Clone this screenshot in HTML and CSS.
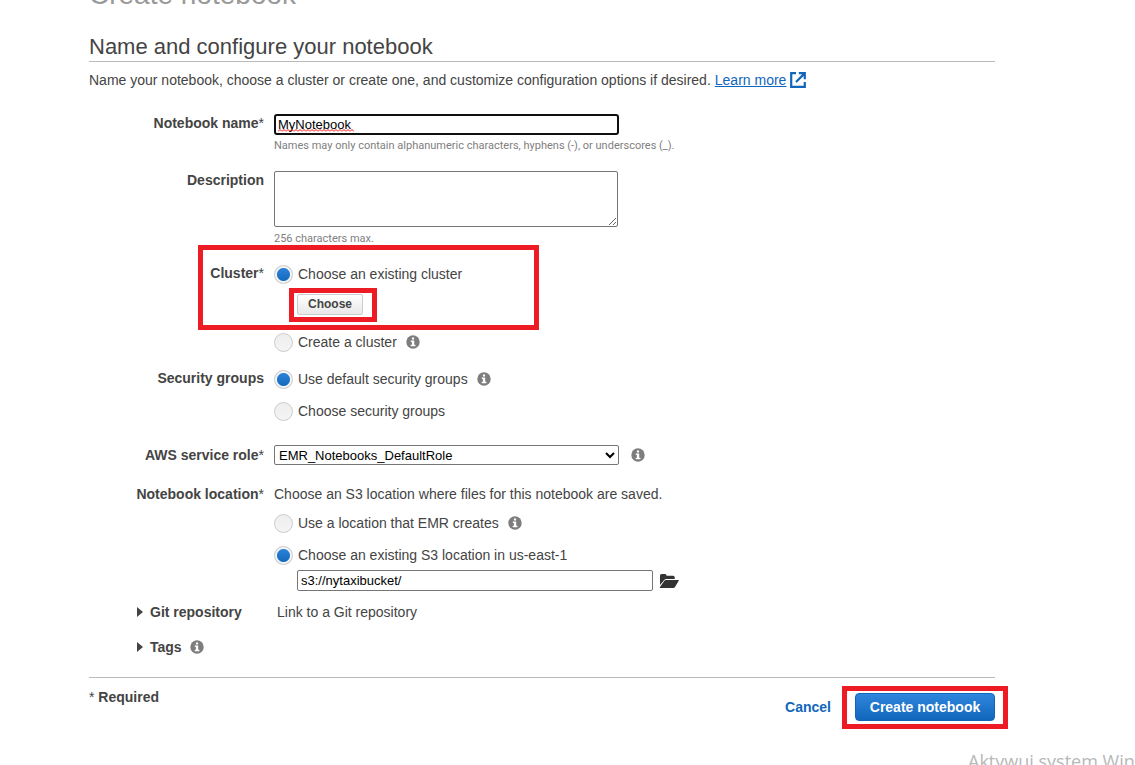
FILE: index.html
```html
<!DOCTYPE html>
<html lang="en">
<head>
<meta charset="utf-8">
<title>Create notebook</title>
<link rel="stylesheet" href="styles.css">
</head>
<body>
<svg class="defs" aria-hidden="true">
  <symbol id="info" viewBox="0 0 14 14">
    <circle cx="7" cy="7" r="6.7" fill="#7d7d7d"/>
    <path d="M5.9 2.4h2.2v2H5.9zM4.8 5.5h3.4v4.3h1.2v1.4H4.7V9.8h1.2V6.9H4.8z" fill="#fff"/>
  </symbol>
</svg>
<main class="page">
  <h1 class="title">Create notebook</h1>
  <h2 class="heading">Name and configure your notebook</h2>
  <p class="intro">Name your notebook, choose a cluster or create one, and customize configuration options if desired. <a class="learn" href="#">Learn more</a>
    <svg class="external" viewBox="0 0 16 16" aria-hidden="true"><path d="M6 1.2H1.2v13.6h13.6V10M8.8 1.2h6v6M14.4 1.6L6 10" fill="none" stroke="#1166bb" stroke-width="2.2"/></svg>
  </p>
  <form class="form">
    <div class="row">
      <label class="label" for="name">Notebook name<span class="star">*</span></label>
      <div class="field">
        <div class="name-box">
          <input class="text name" id="name" type="text" value="MyNotebook" spellcheck="false">
          <svg class="squiggle" viewBox="0 0 76 3" aria-hidden="true">
            <defs><pattern id="wave" width="4" height="3" patternUnits="userSpaceOnUse"><path d="M0 2.5L2 .5L4 2.5" fill="none" stroke="#f00"/></pattern></defs>
            <rect width="76" height="3" fill="url(#wave)"/>
          </svg>
        </div>
        <p class="help">Names may only contain alphanumeric characters, hyphens (-), or underscores (_).</p>
      </div>
    </div>
    <div class="row">
      <label class="label" for="desc">Description</label>
      <div class="field">
        <textarea class="text desc" id="desc"></textarea>
        <p class="help">256 characters max.</p>
      </div>
    </div>
    <div class="row cluster">
      <div class="label" id="cluster-label">Cluster<span class="star">*</span></div>
      <div class="field" role="radiogroup" aria-labelledby="cluster-label">
        <label class="option"><input class="radio" type="radio" name="cluster" checked>Choose an existing cluster</label>
        <div class="choose-box"><button class="choose" type="button">Choose</button><span class="mark mark-choose"></span></div>
        <div class="option create-option"><label class="option"><input class="radio" type="radio" name="cluster">Create a cluster</label><svg class="info"><use href="#info"/></svg></div>
      </div>
      <span class="mark mark-cluster"></span>
    </div>
    <div class="row">
      <div class="label" id="sg-label">Security groups</div>
      <div class="field options" role="radiogroup" aria-labelledby="sg-label">
        <div class="option"><label class="option"><input class="radio" type="radio" name="sg" checked>Use default security groups</label><svg class="info"><use href="#info"/></svg></div>
        <label class="option"><input class="radio" type="radio" name="sg">Choose security groups</label>
      </div>
    </div>
    <div class="row role-row">
      <label class="label" for="role">AWS service role<span class="star">*</span></label>
      <div class="field option">
        <select class="text role" id="role"><option>EMR_Notebooks_DefaultRole</option></select>
        <svg class="info"><use href="#info"/></svg>
      </div>
    </div>
    <div class="row location-row">
      <div class="label" id="loc-label">Notebook location<span class="star">*</span></div>
      <div class="field" role="radiogroup" aria-labelledby="loc-label">
        <p class="note">Choose an S3 location where files for this notebook are saved.</p>
        <div class="options">
          <div class="option"><label class="option"><input class="radio" type="radio" name="loc">Use a location that EMR creates</label><svg class="info"><use href="#info"/></svg></div>
          <label class="option"><input class="radio" type="radio" name="loc" checked>Choose an existing S3 location in us-east-1</label>
        </div>
        <div class="path">
          <input class="text bucket" type="text" value="s3://nytaxibucket/" aria-label="S3 location">
          <button class="browse" type="button" aria-label="Browse"><svg viewBox="0 0 20 16"><path d="M1 12V2.5Q1 1 2.5 1H6q1 0 1.3 1l.3.7h6.6q1.5 0 1.5 1.5v1.9H7.4q-1.5 0-2.4 1.2z" fill="#333"/><path d="M7 7h12.3q.9 0 .3.9L16 14q-.5.9-1.5.9H1.3q-.8 0-.3-.8L5.2 8q.6-1 1.8-1z" fill="#333"/></svg></button>
        </div>
      </div>
    </div>
    <div class="expander">
      <button class="toggle" type="button"><svg class="caret" viewBox="0 0 6 10"><path d="M0 0L6 5L0 10z" fill="#444"/></svg>Git repository</button>
      <span>Link to a Git repository</span>
    </div>
    <div class="expander tags">
      <button class="toggle" type="button"><svg class="caret" viewBox="0 0 6 10"><path d="M0 0L6 5L0 10z" fill="#444"/></svg>Tags<svg class="info"><use href="#info"/></svg></button>
    </div>
    <footer class="footer">
      <p class="required"><span class="star">*</span> Required</p>
      <div class="actions">
        <a class="cancel" href="#">Cancel</a>
        <div class="create-box"><button class="create" type="button">Create notebook</button><span class="mark mark-create"></span></div>
      </div>
    </footer>
  </form>
</main>
<div class="watermark">Aktywuj system Windows</div>
</body>
</html>
```
FILE: styles.css
```css
* { box-sizing: border-box; }
body {
  margin: 0;
  height: 100vh;
  overflow: hidden;
  position: relative;
  background: #fff;
  color: #444;
  font: 14px/20px "Liberation Sans", Arial, sans-serif;
}
h1, h2, p { margin: 0; font-weight: normal; }
button { font: inherit; color: inherit; cursor: pointer; }
.defs { display: none; }
.page { padding: 0 140px 0 89px; margin-top: -21px; }
.title { font-size: 28px; line-height: 32px; color: #999; }
.heading { margin-top: 22px; border-bottom: 1px solid #bbb; font-size: 22px; line-height: 28px; }
.intro { display: flex; align-items: center; gap: 4px; margin-top: 8px; white-space: nowrap; }
.learn { color: #1166bb; }
.external { width: 16px; height: 16px; }

.form { margin-top: 24px; }
.row { display: grid; grid-template-columns: 175px 1fr; column-gap: 10px; margin-bottom: 17px; position: relative; }
.label { font-weight: bold; line-height: 18px; text-align: right; }
.star { font-weight: normal; }
.text { display: block; margin: 0; border: 1px solid #767676; border-radius: 2px; background: #fff; color: #000; font: 13px "Liberation Sans", Arial, sans-serif; }
.name-box { position: relative; }
.name { width: 345px; height: 21px; padding: 0 2px; border: 2px solid #101010; border-radius: 3px; outline: 0; }
.squiggle { position: absolute; left: 4px; top: 15px; width: 76px; height: 3px; }
.desc { width: 344px; height: 56px; margin-bottom: 4px; resize: both; }
.help { margin-top: 3px; font: 11px/16px Roboto, "Open Sans", sans-serif; color: #808080; }
.desc + .help { margin-top: 0; }

.option { display: flex; align-items: center; }
.options { display: grid; gap: 12px; }
.radio { appearance: none; width: 19px; height: 19px; margin: 0 5px 0 0; border: 1px solid #ccc; border-radius: 50%; background: linear-gradient(#eee, #f4f4f4); }
.radio:checked { background: radial-gradient(circle, transparent 6px, #f4f4f4 7px), linear-gradient(#2e86dc, #1166bb); }
.info { width: 14px; height: 14px; margin-left: 9px; }
.choose-box { position: relative; width: 66px; margin: 10px 0 0 23px; }
.choose { display: block; width: 100%; height: 21px; padding: 0 0 2px; border: 1px solid #ccc; border-radius: 2px; background: linear-gradient(#fff, #e8e8e8); font-size: 12px; font-weight: bold; line-height: 16px; }
.create-option { margin-top: 17px; }
.role-row { margin: 24px 0 19px; }
.role-row .label, .location-row .label { line-height: 20px; }
.role { width: 345px; height: 20px; padding: 0; }
.role + .info { margin-left: 12px; }
.location-row { margin-bottom: 11px; }
.note { margin-bottom: 9px; }
.path { display: flex; align-items: center; gap: 6px; margin: 5px 0 0 23px; }
.bucket { width: 356px; height: 21px; padding: 0 3px; }
.browse { display: flex; width: 20px; padding: 0; border: 0; background: none; }
.browse svg { width: 20px; height: 16px; }

.expander { display: grid; grid-template-columns: 140px 1fr; margin-left: 48px; }
.toggle { display: flex; align-items: center; padding: 0; border: 0; background: none; font-weight: bold; }
.toggle .info { margin-left: 8px; }
.caret { width: 6px; height: 10px; margin-right: 7px; }
.tags { margin-top: 15px; }

.footer { display: flex; justify-content: space-between; align-items: flex-start; margin-top: 20px; padding-top: 10px; border-top: 1px solid #bbb; }
.required { line-height: 18px; font-weight: bold; }
.actions { display: flex; align-items: center; gap: 24px; margin-top: 5px; }
.cancel { color: #1166bb; font-weight: bold; text-decoration: none; }
.create-box { position: relative; }
.create { display: block; width: 140px; height: 28px; padding: 0; border: 1px solid #1166bb; border-radius: 4px; background: linear-gradient(#2e86dc, #1166bb); color: #fff; font-weight: bold; }

.mark { position: absolute; border: 5px solid #ed1c24; pointer-events: none; }
.mark-cluster { left: 109px; top: -19px; width: 341px; height: 85px; }
.mark-choose { inset: -6px -14px -7px -8px; }
.mark-create { inset: -7px -13px -8px -13px; }
.watermark { position: absolute; left: 968px; top: 749px; font: 18px/24px "Open Sans", "Noto Sans", sans-serif; color: #b8b8b8; white-space: nowrap; }
```
